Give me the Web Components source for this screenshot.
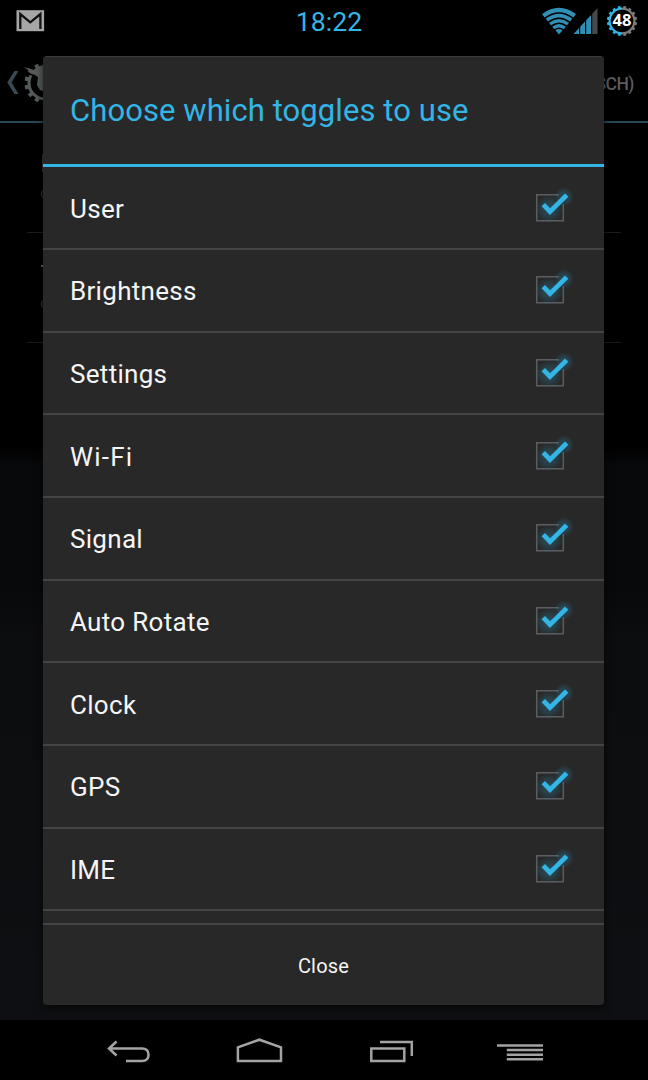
<!DOCTYPE html>
<html lang="en">
<head>
<meta charset="utf-8">
<title>Toggles</title>
<style>
  body {
    margin: 0;
    background: #000;
    font-family: Roboto, "Noto Sans", sans-serif;
    color: #fff;
  }
  .wide {
    letter-spacing: 1.2px;
  }
</style>
</head>
<body>
<phone-screen>
  <status-bar slot="status">18:22</status-bar>
  <settings-page slot="page">SCH)</settings-page>
  <toggle-dialog slot="dialog">
    <span slot="title">Choose which toggles to use</span>
    <toggle-row>User</toggle-row>
    <toggle-row>Brightness</toggle-row>
    <toggle-row>Settings</toggle-row>
    <toggle-row class="wide">Wi-Fi</toggle-row>
    <toggle-row>Signal</toggle-row>
    <toggle-row>Auto Rotate</toggle-row>
    <toggle-row>Clock</toggle-row>
    <toggle-row>GPS</toggle-row>
    <toggle-row>IME</toggle-row>
    <span slot="action">Close</span>
  </toggle-dialog>
  <nav-keys slot="nav"></nav-keys>
</phone-screen>

<script>
// teeth of a cog as short radial lines
function cogTeeth(cx, cy, inner, outer, count) {
  let d = "";
  for (let i = 0; i < count; i++) {
    const a = ((i + 0.5) / count) * Math.PI * 2;
    const x = Math.cos(a);
    const y = Math.sin(a);
    d += `M${(cx + x * inner).toFixed(2)} ${(cy + y * inner).toFixed(2)}L${(cx + x * outer).toFixed(2)} ${(cy + y * outer).toFixed(2)}`;
  }
  return d;
}

class PhoneScreen extends HTMLElement {
  constructor() {
    super();
    this.attachShadow({ mode: "open" });
  }
  connectedCallback() {
    this.shadowRoot.innerHTML = `
      <style>
        :host {
          display: flex;
          flex-direction: column;
          position: relative;
          width: 648px;
          height: 1080px;
          overflow: hidden;
        }
        .page {
          flex: 1;
          display: flex;
        }
        .overlay {
          position: absolute;
          left: 43px;
          top: 56px;
        }
      </style>
      <slot name="status"></slot>
      <div class="page"><slot name="page"></slot></div>
      <slot name="nav"></slot>
      <div class="overlay"><slot name="dialog"></slot></div>
    `;
  }
}

class StatusBar extends HTMLElement {
  constructor() {
    super();
    this.attachShadow({ mode: "open" });
  }
  connectedCallback() {
    this.shadowRoot.innerHTML = `
      <style>
        :host {
          display: grid;
          grid-template-columns: 1fr auto 1fr;
          align-items: center;
          height: 42px;
          padding: 0 10px 0 16px;
          box-sizing: border-box;
          background: #000;
        }
        svg { display: block; }
        .time {
          font-size: 26.7px;
          line-height: 40px;
          color: #33b5e5;
          padding: 2px 0 0 4px;
        }
        .icons {
          display: flex;
          justify-content: flex-end;
        }
        text {
          font: bold 16.5px "Open Sans", "Noto Sans", sans-serif;
        }
      </style>
      <svg width="29" height="22" viewBox="0 0 29 22">
        <rect x=".5" y=".2" width="27.6" height="21" fill="#a6a6a6"/>
        <path d="M4.300 19V4L14.300 12.300L24.400 4V19" fill="none" stroke="#111" stroke-width="2.300"/>
      </svg>
      <div class="time"><slot></slot></div>
      <div class="icons">
        <svg width="98" height="42" viewBox="540 0 98 42">
          <g fill="none" stroke="#2f8fb5">
            <path d="M543.300 15.700Q559 4.300 574.700 15.700" stroke-width="4.200"/>
            <path d="M546.900 20Q559 11.200 571.100 20" stroke-width="3.600"/>
            <path d="M550 24Q559 17.400 568 24" stroke-width="3.300"/>
            <path d="M553.200 28Q559 23.500 564.800 28" stroke-width="3.200"/>
          </g>
          <path d="M555.400 30.200Q559 27.700 562.600 30.200L559 34.500Z" fill="#2f8fb5"/>
          <path d="M573.500 34L579 28V34Z M580.200 26.700L585 21.500V34H580.200Z M586.200 20.200L591 15V34H586.200Z" fill="#2f8fb5"/>
          <path d="M592.200 13.700L597.500 8V34H592.200Z" fill="#484848"/>
          <g fill="none" stroke-width="2.200">
            <path d="M622 8.600A12.400 12.400 0 0 0 622 33.400" stroke="#33b5e5"/>
            <path d="M622 8.600A12.400 12.400 0 0 1 622 33.400" stroke="#7d7d7d"/>
          </g>
          <clipPath id="left"><path d="M600 0H622V42H600Z"/></clipPath>
          <clipPath id="right"><path d="M622 0H640V42H622Z"/></clipPath>
          <path d="${cogTeeth(622, 21, 13, 15.1, 16)}" stroke="#33b5e5" stroke-width="2.900" clip-path="url(#left)"/>
          <path d="${cogTeeth(622, 21, 13, 15.1, 16)}" stroke="#7d7d7d" stroke-width="2.900" clip-path="url(#right)"/>
          <text x="622" y="26" text-anchor="middle" fill="#fff">48</text>
        </svg>
      </div>
    `;
  }
}

class SettingsPage extends HTMLElement {
  constructor() {
    super();
    this.attachShadow({ mode: "open" });
  }
  connectedCallback() {
    this.shadowRoot.innerHTML = `
      <style>
        :host {
          flex: 1;
          display: flex;
          flex-direction: column;
          background: linear-gradient(#000 0, #000 404px, #08090a 424px, #08090a 545px, #0c0d0f 600px, #0e0f12 978px);
        }
        header {
          display: flex;
          justify-content: space-between;
          align-items: center;
          height: 81px;
          box-sizing: border-box;
          padding-right: 14px;
          border-bottom: 2px solid #284855;
        }
        .account {
          font-size: 17.5px;
          font-weight: 500;
          letter-spacing: -0.5px;
          color: #5c5c5c;
          padding-top: 4px;
        }
        .item {
          display: flex;
          flex-direction: column;
          height: 109px;
          margin: 0 27px;
          padding-left: 14px;
          border-bottom: 1px solid #1c1c1c;
        }
        .item i {
          width: 9px;
          height: 2px;
          margin-top: 32px;
          background: #666;
        }
        .item b {
          width: 10px;
          height: 10px;
          margin-top: 31px;
          border: 1.5px solid #2d4552;
          border-radius: 50%;
        }
        .item.first i {
          width: 4px;
          height: 18px;
          margin: 31px 0 0 1px;
          background: #333;
        }
        .item.first b { margin-top: 16px; }
      </style>
      <header>
        <svg width="80" height="79" viewBox="0 42 80 79">
          <path d="M18.500 71L11.500 82.500L18.500 94H14.500L7.300 82.500L14.500 71Z" fill="#3b4a52"/>
          <circle cx="45" cy="83" r="16" fill="none" stroke="#565a5b" stroke-width="3"/>
          <path d="${cogTeeth(45, 83, 16, 20.5, 14)}" stroke="#565a5b" stroke-width="4"/>
          <path d="M24 67L34 70L39 67L43 65V91L40 90L37 85L38 77L34 74.500Z" fill="#565a5b"/>
          <path d="M27 72.500L33 75.500" stroke="#000" stroke-width="1.500"/>
        </svg>
        <div class="account"><slot></slot></div>
      </header>
      <div class="item first"><i></i><b></b></div>
      <div class="item"><i></i><b></b></div>
    `;
  }
}

class ToggleDialog extends HTMLElement {
  constructor() {
    super();
    this.attachShadow({ mode: "open" });
  }
  connectedCallback() {
    this.shadowRoot.innerHTML = `
      <style>
        :host {
          display: flex;
          flex-direction: column;
          width: 561px;
          height: 949px;
          box-sizing: border-box;
          background: #282828;
          border-top: 1px solid #363c3f;
          border-radius: 4px;
          box-shadow: 0 3px 8px rgba(0, 0, 0, 0.6);
        }
        header {
          display: flex;
          align-items: center;
          height: 106.7px;
          padding-left: 27px;
          font-size: 31px;
          letter-spacing: 0.08px;
          color: #33b5e5;
        }
        .rule {
          height: 3.6px;
          background: #33b5e5;
        }
        .list {
          flex: 1;
          overflow: hidden;
        }
        footer {
          display: flex;
          align-items: center;
          justify-content: center;
          height: 82px;
          padding-top: 1px;
          box-sizing: border-box;
          border-top: 2px solid #444;
          font-size: 20px;
          letter-spacing: 0.2px;
          color: #f5f5f5;
        }
      </style>
      <header><slot name="title"></slot></header>
      <div class="rule"></div>
      <div class="list"><slot></slot></div>
      <footer><slot name="action"></slot></footer>
    `;
  }
}

class ToggleRow extends HTMLElement {
  constructor() {
    super();
    this.attachShadow({ mode: "open" });
  }
  connectedCallback() {
    this.shadowRoot.innerHTML = `
      <style>
        :host {
          display: flex;
          align-items: center;
          justify-content: space-between;
          height: 82.7px;
          box-sizing: border-box;
          padding: 0 28px 0 27px;
          border-bottom: 2px solid #444;
          font-size: 26px;
          letter-spacing: 0.3px;
          color: #f5f5f5;
        }
        span { padding-top: 2px; }
      </style>
      <span><slot></slot></span>
      <svg width="48" height="48" viewBox="0 0 48 48">
        <defs>
          <radialGradient id="glow">
            <stop offset="0" stop-color="#2b7797" stop-opacity=".5"/>
            <stop offset=".6" stop-color="#2b7797" stop-opacity=".25"/>
            <stop offset="1" stop-color="#2b7797" stop-opacity="0"/>
          </radialGradient>
        </defs>
        <path d="M31 10.700H8.700V36.700H35.300V20" fill="none" stroke="#5a5e60" stroke-width="1.500"/>
        <circle cx="21" cy="25" r="14" fill="url(#glow)"/>
        <circle cx="36" cy="13" r="10" fill="url(#glow)"/>
        <path d="M15.300 20.700L22 27.600L38.700 11.100" fill="none" stroke="#33b5e5" stroke-width="4.800"/>
      </svg>
    `;
  }
}

class NavKeys extends HTMLElement {
  constructor() {
    super();
    this.attachShadow({ mode: "open" });
  }
  connectedCallback() {
    this.shadowRoot.innerHTML = `
      <style>
        :host {
          display: flex;
          justify-content: center;
          gap: 70px;
          height: 60px;
          background: #000;
        }
        svg {
          margin-top: 10px;
          fill: none;
          stroke: #a3a3a3;
          stroke-width: 2.5;
        }
      </style>
      <svg width="60" height="40" viewBox="0 0 60 40">
        <path d="M17.500 11.500L10 18.500L17.500 25.500M10 18.400H43Q49.500 18.400 49.500 24.700Q49.500 31 43 31H27"/>
      </svg>
      <svg width="60" height="40" viewBox="0 0 60 40">
        <path d="M8.900 31V17.300L30.400 9.700L52 17.300V31Z"/>
      </svg>
      <svg width="60" height="40" viewBox="0 0 60 40">
        <path d="M12.300 18.500H45.300V31H12.300Z M21 12H52.800V26"/>
      </svg>
      <svg width="60" height="40" viewBox="0 0 60 40">
        <path d="M8 15.500H54M17.800 20H54M17.800 24.700H54M17.800 29.300H54"/>
      </svg>
    `;
  }
}

customElements.define("phone-screen", PhoneScreen);
customElements.define("status-bar", StatusBar);
customElements.define("settings-page", SettingsPage);
customElements.define("toggle-dialog", ToggleDialog);
customElements.define("toggle-row", ToggleRow);
customElements.define("nav-keys", NavKeys);
</script>
</body>
</html>
